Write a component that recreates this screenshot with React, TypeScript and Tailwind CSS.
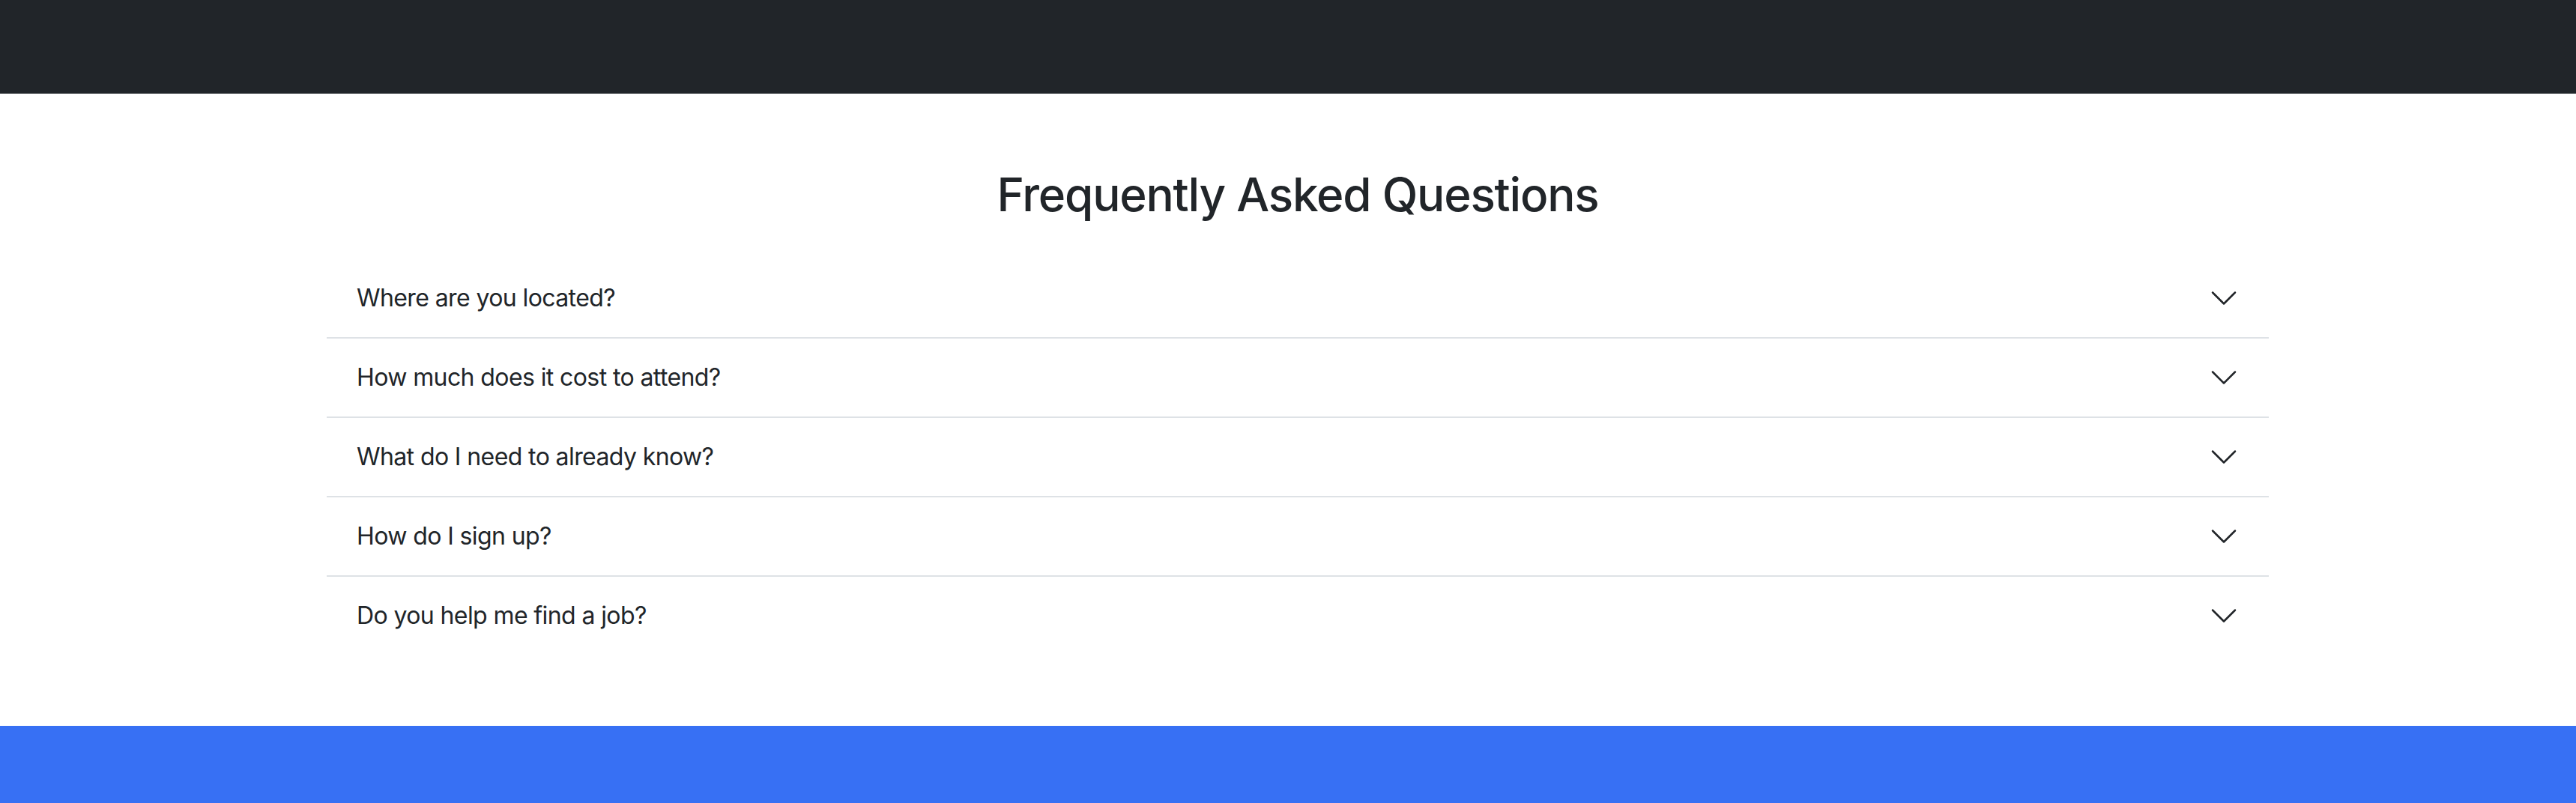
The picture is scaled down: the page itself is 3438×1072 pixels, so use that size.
import React from "react";

const questions = [
  "Where are you located?",
  "How much does it cost to attend?",
  "What do I need to already know?",
  "How do I sign up?",
  "Do you help me find a job?",
];

const Chevron = () => (
  <svg
    viewBox="0 0 16 16"
    fill="none"
    stroke="#212529"
    strokeLinecap="round"
    strokeLinejoin="round"
    className="w-[40px] h-[40px] shrink-0"
  >
    <path d="M2 5L8 11L14 5" />
  </svg>
);

export default function App() {
  return (
    <div className="min-h-screen bg-white text-[#212529] font-['Inter','Liberation_Sans',sans-serif]">
      <nav className="h-[125px] bg-[#212529]" />

      <section className="pt-[96px] pb-[95px]">
        <div className="ml-[436px] w-[2592px]">
          <h2 className="text-[62px] leading-[77px] font-medium text-center tracking-[-1.2px] mb-[48px]">
            Frequently Asked Questions
          </h2>

          <div className="flex flex-col">
            {questions.map((q, i) => (
              <button
                key={i}
                className={
                  "flex items-center justify-between px-[40px] text-left text-[32px] tracking-[-0.6px] " +
                  (i < questions.length - 1 ? "h-[106px] border-b-2 border-[#dee2e6]" : "h-[104px]")
                }
              >
                <span>{q}</span>
                <Chevron />
              </button>
            ))}
          </div>
        </div>
      </section>

      <footer className="h-[103px] bg-[#3770f4]" />
    </div>
  );
}
